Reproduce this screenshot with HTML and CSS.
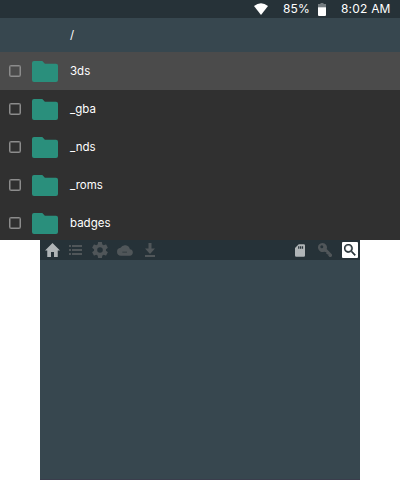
FILE: index.html
```html
<!DOCTYPE html>
<html lang="en">
<head>
<meta charset="utf-8">
<title>File manager</title>
<link rel="stylesheet" href="styles.css">
</head>
<body>
<svg class="defs" width="0" height="0">
  <symbol id="folder" viewBox="0 0 26 21"><path d="M2 0h8.300l2.600 2.700H24a2 2 0 0 1 2 2V19a2 2 0 0 1-2 2H2a2 2 0 0 1-2-2V2a2 2 0 0 1 2-2z"/></symbol>
</svg>
<section class="top-screen">
  <header class="status">
    <svg class="wifi" viewBox="0 0 14 12"><path d="M0 3Q7-2.600 14 3L7 12z"/></svg>
    <span class="percent">85%</span>
    <svg class="battery" viewBox="0 0 8 13"><path class="empty" d="M2.500 0h3v1H8v3.500H0V1h2.500z"/><path d="M0 4.300h8v7.700a1 1 0 0 1-1 1H1a1 1 0 0 1-1-1z"/></svg>
    <span class="clock">8:02 AM</span>
  </header>
  <div class="path"><span class="label">/</span></div>
  <ul class="files">
    <li class="row selected"><i class="check"></i><svg class="folder"><use href="#folder"/></svg><span class="label">3ds</span></li>
    <li class="row"><i class="check"></i><svg class="folder"><use href="#folder"/></svg><span class="label">_gba</span></li>
    <li class="row"><i class="check"></i><svg class="folder"><use href="#folder"/></svg><span class="label">_nds</span></li>
    <li class="row"><i class="check"></i><svg class="folder"><use href="#folder"/></svg><span class="label">_roms</span></li>
    <li class="row"><i class="check"></i><svg class="folder"><use href="#folder"/></svg><span class="label">badges</span></li>
  </ul>
</section>
<section class="bottom-screen">
  <nav class="toolbar">
    <svg class="icon home" viewBox="2 3 20 17" preserveAspectRatio="none"><path d="M10 20v-6h4v6h5v-8h3L12 3 2 12h3v8z"/></svg>
    <svg class="icon list" viewBox="0 0 13 10"><path d="M0 0h2v2H0zM3 0h10v2H3zM0 4h2v2H0zM3 4h10v2H3zM0 8h2v2H0zM3 8h10v2H3z"/></svg>
    <svg class="icon gear" viewBox="2 2 20 20"><path d="M19.430 12.980c.04-.32.07-.64.07-.98s-.03-.66-.07-.98l2.110-1.650c.19-.15.24-.42.12-.64l-2-3.460c-.12-.22-.39-.3-.61-.22l-2.490 1c-.52-.4-1.080-.73-1.690-.98l-.38-2.650C14.460 2.180 14.250 2 14 2h-4c-.25 0-.46.18-.49.42l-.38 2.650c-.61.25-1.170.59-1.690.98l-2.490-1c-.23-.09-.49 0-.61.22l-2 3.460c-.13.22-.07.49.12.64l2.110 1.650c-.04.32-.07.65-.07.98s.03.66.07.98l-2.110 1.650c-.19.15-.24.42-.12.64l2 3.460c.12.22.39.3.61.22l2.490-1c.52.4 1.080.73 1.690.98l.38 2.650c.03.24.24.42.49.42h4c.25 0 .46-.18.49-.42l.38-2.650c.61-.25 1.170-.59 1.690-.98l2.490 1c.23.09.49 0 .61-.22l2-3.460c.12-.22.07-.49-.12-.64zM12 15.500a3.500 3.500 0 1 1 0-7 3.500 3.500 0 0 1 0 7z"/></svg>
    <svg class="icon cloud" viewBox="0 4 24 16"><path d="M19.350 10.040A7.490 7.490 0 0 0 5.350 8.040 6 6 0 0 0 6 20h13a5 5 0 0 0 .35-9.960z"/><path class="mark" d="M8 14.500h7"/></svg>
    <svg class="icon download" viewBox="0 0 12 14"><path d="M4.500 0h3v5.500H11L6 11 1 5.500h3.500zM1 12h10v2H1z"/></svg>
    <svg class="icon card" viewBox="4 2 16 20"><path fill-rule="evenodd" d="M18 2h-8L4 8v12a2 2 0 0 0 2 2h12a2 2 0 0 0 2-2V4a2 2 0 0 0-2-2zM9 5h2v4H9zM12 5h2v4h-2zM15 5h2v4h-2z"/></svg>
    <svg class="icon key" viewBox="0 0 14 14"><path fill-rule="evenodd" d="M4.500 0a4.500 4.500 0 0 1 4.200 6.100L14 11.400V13l-1 1h-1.500l-1.200-1.200v-1.500l-1 .2-1.100-1.100.2-1.200-2.300-.5A4.500 4.500 0 1 1 4.500 0zM3.800 2.300a1.500 1.500 0 1 0 0 3 1.500 1.500 0 0 0 0-3z"/></svg>
    <span class="search"><svg viewBox="3 3 18 18"><path d="M15.500 14h-.79l-.28-.27A6.500 6.500 0 1 0 13.730 14.430l.27.28v.79l5 4.990L20.490 19zM9.500 14a4.500 4.500 0 1 1 0-9 4.500 4.500 0 0 1 0 9z"/></svg></span>
  </nav>
  <div class="panel"></div>
</section>
</body>
</html>
```
FILE: styles.css
```css
* { box-sizing: border-box; }
body { margin: 0; width: 400px; height: 480px; overflow: hidden; background: #fff; color: #fff; font-family: Inter, "Liberation Sans", sans-serif; }
svg { display: block; flex: none; }
.defs { position: absolute; }
.top-screen { height: 240px; overflow: hidden; background: #303030; }
.status { display: flex; align-items: center; height: 18px; padding-left: 254px; background: #263238; font-size: 12px; line-height: 18px; white-space: nowrap; }
.wifi { width: 14px; height: 12px; fill: #fff; margin-right: 15px; }
.percent { width: 35px; letter-spacing: .1px; }
.battery { width: 8px; height: 13px; fill: #fff; }
.battery .empty { fill: #747c80; }
.clock { margin-left: 15px; letter-spacing: .2px; }
.path { display: flex; align-items: center; height: 34px; padding-left: 70px; background: #37474f; }
.label { font-size: 11.5px; line-height: 18px; letter-spacing: 0; }
.files { margin: 0; padding: 0; list-style: none; }
.row { display: flex; align-items: center; height: 38px; padding-left: 9px; }
.selected { background: #4b4b4b; }
.check { width: 12px; height: 12px; border: 1px solid #8c8c8c; border-radius: 1.5px; box-shadow: inset 0 0 0 .5px #8c8c8c; margin-right: 11px; }
.folder { width: 26px; height: 21px; margin-right: 12px; fill: #2a8f7c; }
.bottom-screen { width: 320px; height: 240px; margin: 0 auto; background: #37474f; }
.toolbar { display: flex; align-items: center; height: 20px; padding: 0 2px 0 5px; background: #263238; }
.icon { fill: #505659; }
.home { width: 15px; height: 14px; fill: #b0b5b7; margin-right: 9px; }
.list { width: 13px; height: 10px; margin-right: 10px; }
.gear { width: 16px; height: 16px; margin-right: 9px; }
.cloud { width: 16px; height: 11px; margin-right: 11px; }
.mark { fill: none; stroke: #343e42; stroke-width: 1.5; }
.download { width: 12px; height: 14px; }
.card { width: 10px; height: 13px; fill: #b0b5b7; margin-left: auto; margin-right: 13px; }
.key { width: 14px; height: 14px; margin-right: 10px; }
.search { display: flex; align-items: center; justify-content: center; width: 16px; height: 16px; background: #fff; border-radius: 1px; }
.search svg { width: 12px; height: 12px; fill: #263238; stroke: #263238; stroke-width: .6; }
.panel { height: 220px; border-bottom: 1px solid #3a3d4c; }
```
